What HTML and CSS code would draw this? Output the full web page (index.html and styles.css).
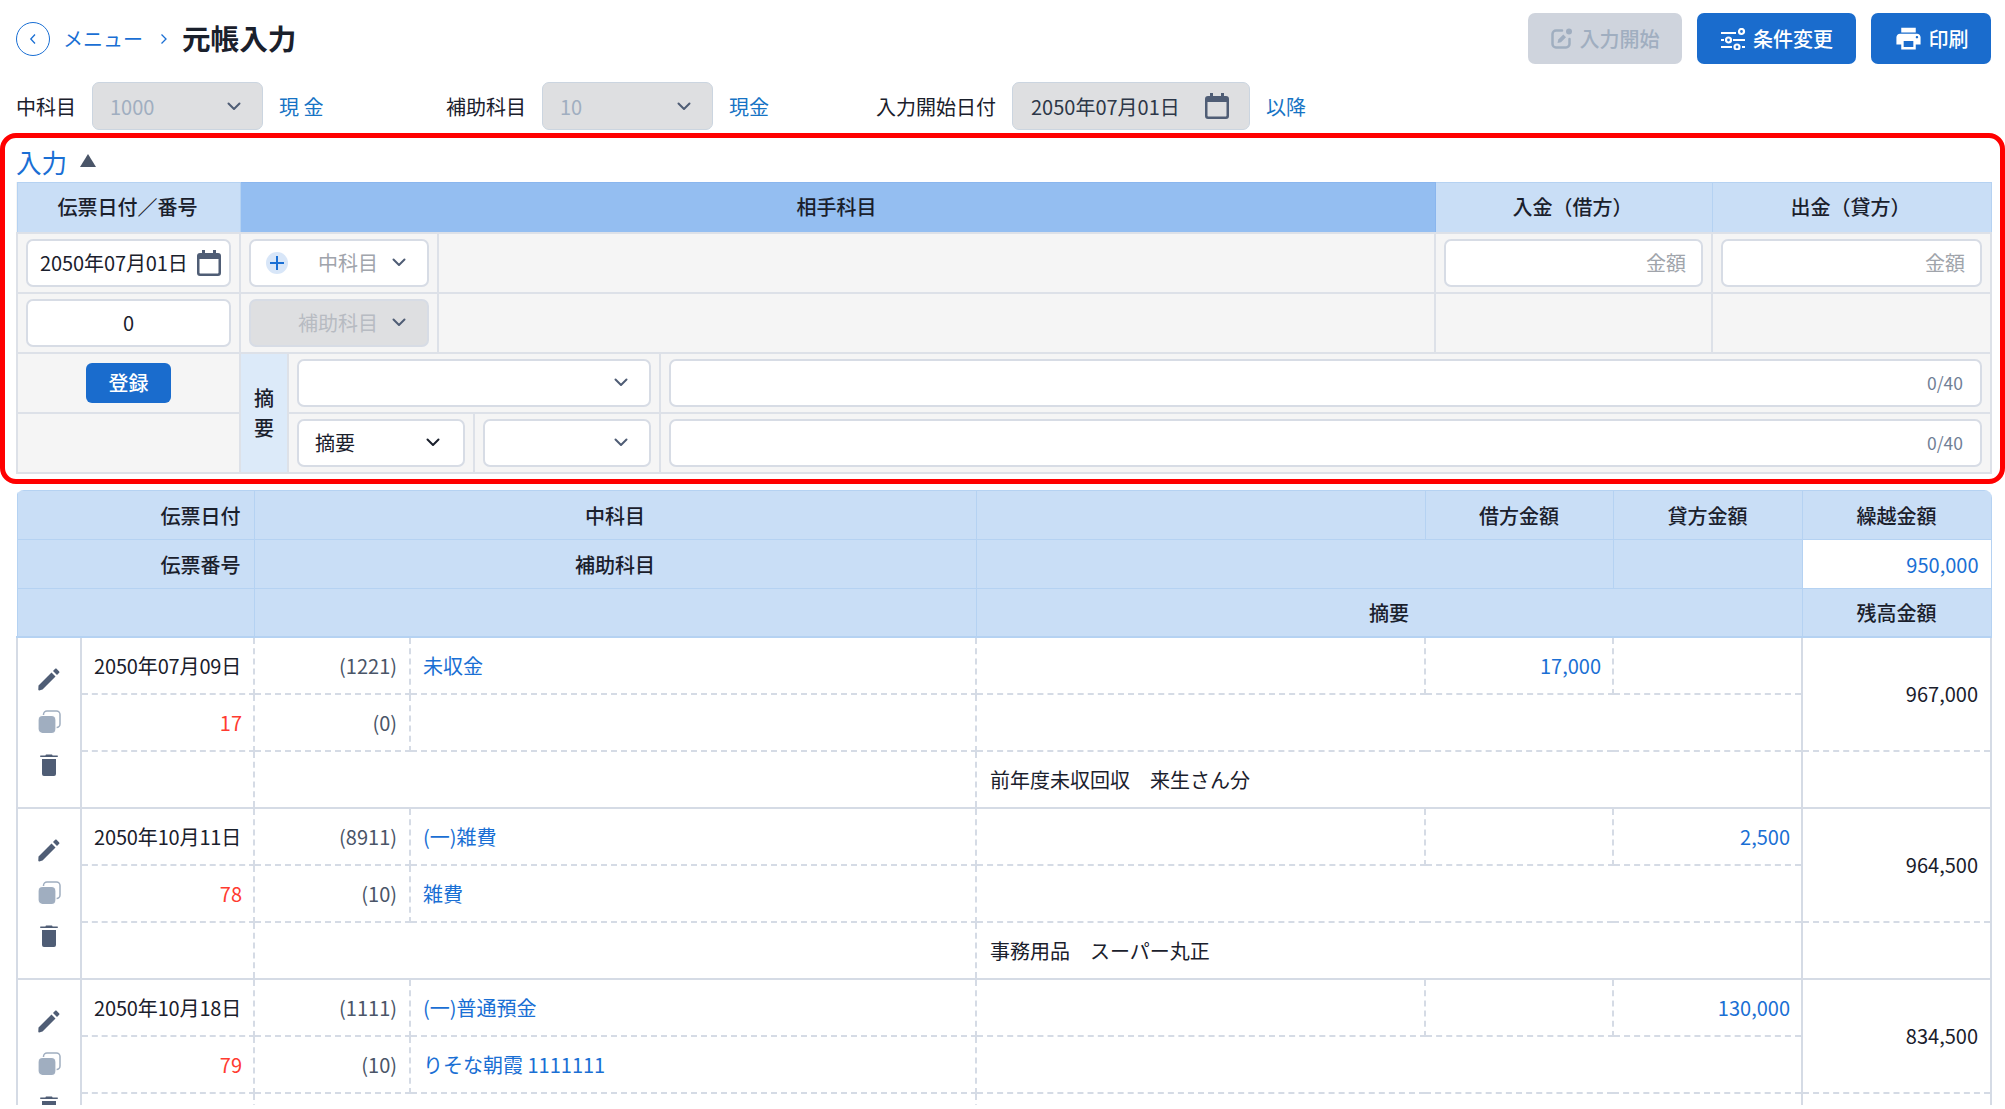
FILE: index.html
```html
<!DOCTYPE html>
<html lang="ja">
<head>
<meta charset="utf-8">
<title>元帳入力</title>
<link rel="stylesheet" href="styles.css">
</head>
<body>
<svg width="0" height="0" class="defs">
  <symbol id="chev" viewBox="0 0 14 9"><path d="M1.5 1.5 7 7l5.5-5.5" fill="none" stroke="currentColor" stroke-width="2" stroke-linecap="round" stroke-linejoin="round"/></symbol>
  <symbol id="cal" viewBox="0 0 24 26"><path d="M5 0h3v3h8V0h3v3h2a3 3 0 0 1 3 3v17a3 3 0 0 1-3 3H3a3 3 0 0 1-3-3V6a3 3 0 0 1 3-3h2zM2.500 9v13.500c0 .6.4 1 1 1h17c.6 0 1-.4 1-1V9z" fill="currentColor" fill-rule="evenodd"/></symbol>
  <symbol id="pen" viewBox="0 0 24 24"><path d="M1.500 18.500 14.500 5.500l4 4-13 13-3.300.9c-.5.1-1-.3-.9-.9zM16 4l2.200-2.200c.4-.4 1-.4 1.400 0l2.600 2.600c.4.4.4 1 0 1.400L20 8z" fill="currentColor"/></symbol>
  <symbol id="copy" viewBox="0 0 24 24"><rect x="6.500" y="1" width="16.500" height="16.500" rx="3.500" fill="none" stroke="#a0aec0" stroke-width="1.500"/><rect x="1" y="5.500" width="18" height="18" rx="4.500" fill="#a0aec0" stroke="#fff" stroke-width="1.200"/></symbol>
  <symbol id="trash" viewBox="0 0 24 24"><path d="M9.500 1.500h5c.5 0 1 .4 1 .9h5c.5 0 .5 1.600 0 1.600h-17c-.5 0-.5-1.600 0-1.600h5c0-.5.500-.9 1-.9zM5 6h14v15a2 2 0 0 1-2 2H7a2 2 0 0 1-2-2z" fill="currentColor"/></symbol>
</svg>

<div class="page">
  <header class="top">
    <nav class="crumb">
      <a class="back"><svg width="8" height="12" viewBox="0 0 8 12"><path d="M6 1.500 1.800 6 6 10.500" fill="none" stroke="currentColor" stroke-width="1.300"/></svg></a>
      <a class="crumb-link">メニュー</a>
      <svg class="crumb-sep" width="8" height="12" viewBox="0 0 8 12"><path d="M1.500 1.500 6 6l-4.500 4.500" fill="none" stroke="currentColor" stroke-width="1.300"/></svg>
      <h1 class="title">元帳入力</h1>
    </nav>
    <div class="actions">
      <button class="btn btn-off">
        <svg width="22" height="21" viewBox="0 0 22 21"><path d="M11 2.500H5A3.500 3.500 0 0 0 1.500 6v10A3.500 3.500 0 0 0 5 19.500h10a3.500 3.500 0 0 0 3.500-3.500v-5" fill="none" stroke="currentColor" stroke-width="2.500" stroke-linecap="round"/><path d="m6.500 15 .8-3.500 5-5 2.700 2.700-5 5z" fill="currentColor"/><circle cx="18" cy="3.500" r="3" fill="currentColor"/></svg>
        <span>入力開始</span>
      </button>
      <button class="btn">
        <svg width="26" height="22" viewBox="0 0 26 22" fill="none" stroke="#fff" stroke-width="2.200"><path d="M1 5h15M1 12h3M13 12h12M1 19h11M22 19h3"/><circle cx="21.500" cy="3.500" r="2.500"/><circle cx="8.500" cy="12" r="2.500"/><circle cx="17" cy="19" r="2.500"/></svg>
        <span>条件変更</span>
      </button>
      <button class="btn btn-print">
        <svg width="29" height="29" viewBox="0 0 24 24"><path fill="#fff" d="M19 8H5c-1.660 0-3 1.340-3 3v6h4v4h12v-4h4v-6c0-1.660-1.340-3-3-3zm-3 11H8v-5h8v5zm3-7c-.55 0-1-.45-1-1s.45-1 1-1 1 .45 1 1-.45 1-1 1zm-1-9H6v4h12V3z"/></svg>
        <span>印刷</span>
      </button>
    </div>
  </header>

  <div class="filters">
    <div class="filter filter-a">
      <label>中科目</label>
      <div class="pick pick-off"><span>1000</span><svg class="chev"><use href="#chev"/></svg></div>
      <a class="teal">現 金</a>
    </div>
    <div class="filter filter-b">
      <label>補助科目</label>
      <div class="pick pick-off"><span>10</span><svg class="chev"><use href="#chev"/></svg></div>
      <a class="teal">現金</a>
    </div>
    <div class="filter">
      <label>入力開始日付</label>
      <div class="pick pick-date"><span>2050年07月01日</span><svg class="cal"><use href="#cal"/></svg></div>
      <a class="teal">以降</a>
    </div>
  </div>

  <section class="entry">
    <div class="entry-head"><span class="entry-title">入力</span><i class="tri"></i></div>
    <table class="form">
      <colgroup><col class="f1"><col class="f2"><col class="f3"><col class="f4"><col class="f5"><col class="f6"><col class="f7"><col class="f8"></colgroup>
      <tr class="form-head">
        <th>伝票日付／番号</th>
        <th class="deep" colspan="5">相手科目</th>
        <th>入金（借方）</th>
        <th>出金（貸方）</th>
      </tr>
      <tr>
        <td><div class="field date"><span>2050年07月01日</span><svg class="cal"><use href="#cal"/></svg></div></td>
        <td colspan="2"><div class="field acc"><i class="plus"></i><span class="ph">中科目</span><svg class="chev"><use href="#chev"/></svg></div></td>
        <td colspan="3"></td>
        <td><div class="field right"><span class="ph">金額</span></div></td>
        <td><div class="field right"><span class="ph">金額</span></div></td>
      </tr>
      <tr>
        <td><div class="field center"><span>0</span></div></td>
        <td colspan="2"><div class="field acc acc-off"><span class="ph-off">補助科目</span><svg class="chev"><use href="#chev"/></svg></div></td>
        <td colspan="3"></td>
        <td></td>
        <td></td>
      </tr>
      <tr>
        <td class="mid"><button class="submit">登録</button></td>
        <td class="memo-label" rowspan="2">摘<br>要</td>
        <td colspan="3"><div class="field end"><svg class="chev"><use href="#chev"/></svg></div></td>
        <td colspan="3"><div class="field right"><span class="count">0/40</span></div></td>
      </tr>
      <tr>
        <td></td>
        <td colspan="2"><div class="field between"><span>摘要</span><svg class="chev dark"><use href="#chev"/></svg></div></td>
        <td><div class="field end"><svg class="chev"><use href="#chev"/></svg></div></td>
        <td colspan="3"><div class="field right"><span class="count">0/40</span></div></td>
      </tr>
    </table>
  </section>

  <div class="ledger">
    <table class="grid">
      <colgroup><col class="g1"><col class="g2"><col class="g3"><col class="g4"><col class="g5"><col class="g6"><col class="g7"><col class="g8"></colgroup>
      <thead>
        <tr>
          <th class="r" colspan="2">伝票日付</th>
          <th colspan="2">中科目</th>
          <th></th>
          <th>借方金額</th>
          <th>貸方金額</th>
          <th>繰越金額</th>
        </tr>
        <tr>
          <th class="r" colspan="2">伝票番号</th>
          <th colspan="2">補助科目</th>
          <th colspan="2"></th>
          <th></th>
          <th class="carry">950,000</th>
        </tr>
        <tr class="head-last">
          <th colspan="2"></th>
          <th colspan="2"></th>
          <th colspan="3">摘要</th>
          <th>残高金額</th>
        </tr>
      </thead>
      <tbody>
        <tr class="first">
          <td class="tools" rowspan="3"><div class="tool-stack"><svg class="tool ink"><use href="#pen"/></svg><svg class="tool"><use href="#copy"/></svg><svg class="tool ink"><use href="#trash"/></svg></div></td>
          <td class="l date-cell">2050年07月09日</td><td class="code">(1221)</td><td class="l blue">未収金</td><td></td><td class="num blue">17,000</td><td></td>
          <td class="bal" rowspan="2">967,000</td>
        </tr>
        <tr>
          <td class="num red">17</td><td class="code">(0)</td><td></td><td colspan="3"></td>
        </tr>
        <tr class="third">
          <td></td><td colspan="2"></td><td class="l memo" colspan="3">前年度未収回収　来生さん分</td><td class="bal-end"></td>
        </tr>

        <tr class="first">
          <td class="tools" rowspan="3"><div class="tool-stack"><svg class="tool ink"><use href="#pen"/></svg><svg class="tool"><use href="#copy"/></svg><svg class="tool ink"><use href="#trash"/></svg></div></td>
          <td class="l date-cell">2050年10月11日</td><td class="code">(8911)</td><td class="l blue">(一)雑費</td><td></td><td></td><td class="num blue">2,500</td>
          <td class="bal" rowspan="2">964,500</td>
        </tr>
        <tr>
          <td class="num red">78</td><td class="code">(10)</td><td class="l blue">雑費</td><td colspan="3"></td>
        </tr>
        <tr class="third">
          <td></td><td colspan="2"></td><td class="l memo" colspan="3">事務用品　スーパー丸正</td><td class="bal-end"></td>
        </tr>

        <tr class="first">
          <td class="tools" rowspan="3"><div class="tool-stack"><svg class="tool ink"><use href="#pen"/></svg><svg class="tool"><use href="#copy"/></svg><svg class="tool ink"><use href="#trash"/></svg></div></td>
          <td class="l date-cell">2050年10月18日</td><td class="code">(1111)</td><td class="l blue">(一)普通預金</td><td></td><td></td><td class="num blue">130,000</td>
          <td class="bal" rowspan="2">834,500</td>
        </tr>
        <tr>
          <td class="num red">79</td><td class="code">(10)</td><td class="l blue">りそな朝霞 1111111</td><td colspan="3"></td>
        </tr>
        <tr class="third">
          <td></td><td colspan="2"></td><td class="l memo" colspan="3"></td><td class="bal-end"></td>
        </tr>
      </tbody>
    </table>
  </div>
</div>
</body>
</html>
```

FILE: styles.css
```css
* { box-sizing: border-box; }
html, body { margin: 0; background: #fff; }
body {
  font-family: "Noto Sans CJK JP", "Noto Sans", sans-serif;
  font-size: 20px;
  color: #1a202c;
}
.defs { position: absolute; }
.page { height: 1105px; overflow: hidden; }

/* top bar */
.top {
  display: flex;
  justify-content: space-between;
  align-items: center;
  height: 69px;
  padding: 13px 14px 5px 16px;
}
.crumb { display: flex; align-items: center; color: #1a6fd4; }
.back {
  width: 34px; height: 34px;
  border: 1.5px solid #1a6fd4;
  border-radius: 50%;
  display: flex; align-items: center; justify-content: center;
}
.crumb-link { margin-left: 13px; line-height: 1; }
.crumb-sep { margin-left: 17px; }
.title { margin: 0 0 0 14px; font-size: 28.6px; font-weight: 700; line-height: 1; color: #1a202c; }
.actions { display: flex; gap: 15px; }
.btn {
  display: flex; align-items: center; justify-content: center; gap: 7px;
  width: 159px; height: 51px;
  border: 0; border-radius: 7px;
  background: #1a6ccd; color: #fff;
  font: 500 20px "Noto Sans CJK JP", sans-serif;
}
.btn-off { width: 154px; background: #cfd4dd; color: #a0aec0; }
.btn-print { width: 120px; gap: 6px; }

/* filters */
.filters {
  display: flex; align-items: center;
  height: 48px; margin-top: 13px;
  padding-left: 16px;
}
.filter { display: flex; align-items: center; }
.filter-a { width: 430px; }
.filter-b { width: 430px; }
.filter label { margin-right: 16px; }
.teal { color: #1673c4; margin-left: 16px; }
.pick {
  display: flex; align-items: center; justify-content: space-between;
  width: 171px; height: 48px;
  padding: 0 21px 0 17px;
  background: #dedfe1; border: 1px solid #cbd5e0; border-radius: 7px;
  color: #a0aec0;
}
.pick-date { width: 238px; padding: 0 20px 0 18px; color: #2d3748; }
.chev { width: 14px; height: 9px; color: #4f5d75; flex: none; }
.chev.dark { color: #1a202c; }
.cal { width: 24px; height: 26px; color: #4f5d75; flex: none; }

/* entry */
.entry {
  height: 351px; margin-top: 3px;
  border: 5px solid #ff0000; border-radius: 16px;
  padding: 0 10px 0 11px;
}
.entry-head { display: flex; align-items: center; height: 44px; padding-top: 4px; }
.entry-title { font-size: 25.6px; line-height: 1; color: #1a6fd4; }
.tri {
  width: 0; height: 0; margin: -3px 0 0 13px;
  border-left: 8px solid transparent; border-right: 8px solid transparent;
  border-bottom: 13px solid #4a5568;
}
.form { width: 1974px; table-layout: fixed; border-collapse: collapse; background: #f5f5f5; }
.f1 { width: 223px; } .f2 { width: 48px; } .f3 { width: 150px; } .f4 { width: 36px; }
.f5 { width: 186px; } .f6 { width: 775px; } .f7 { width: 277px; } .f8 { width: 279px; }
.form th {
  height: 50px; padding: 0 2px 2px 0;
  background: #c9def6;
  border: 1px solid #b5d2f2;
  font-weight: 500; text-align: center;
}
.form th.deep { background: #94bef1; border-color: #8ab6ee; }
.form td {
  height: 60px; padding: 0 8px;
  border: 2px solid #dde1e8;
}
.form td.mid { text-align: center; }
.form td.memo-label {
  padding: 0; text-align: center; line-height: 30px;
  background: #dceaf9; font-weight: 500;
}
.field {
  display: flex; align-items: center;
  height: 48px; padding: 0 16px;
  background: #fff; border: 2px solid #d7dce5; border-radius: 7px;
}
.date { justify-content: space-between; padding: 0 8px 0 12px; letter-spacing: -.1px; }
.right { justify-content: flex-end; padding-right: 15px; }
.center { justify-content: center; }
.end { justify-content: flex-end; padding-right: 21px; }
.between { justify-content: space-between; padding: 0 23px 0 16px; }
.acc { padding: 0 21px 0 16px; justify-content: flex-end; position: relative; }
.acc .chev { margin-left: 14px; }
.acc-off { background: #dedfe1; }
.plus {
  position: absolute; left: 15px; top: 11px;
  width: 22px; height: 22px; border-radius: 50%;
  background:
    linear-gradient(#1a6fd4, #1a6fd4) center / 14px 2px no-repeat,
    linear-gradient(#1a6fd4, #1a6fd4) center / 2px 14px no-repeat,
    #d8e6f8;
}
.ph { color: #a0a4ab; }
.ph-off { color: #b7bbc2; }
.count { font-size: 17.5px; margin-right: 2px; color: #718096; }
.submit {
  width: 85px; height: 40px;
  border: 0; border-radius: 6px;
  background: #1a6ccd; color: #fff;
  font: 500 20px "Noto Sans CJK JP", sans-serif;
}

/* ledger */
.ledger {
  width: 1976px; margin: 6px 0 0 16px;
  border-radius: 8px 8px 0 0; overflow: hidden;
}
.grid { width: 1974px; table-layout: fixed; border-collapse: collapse; }
.g1 { width: 64px; } .g2 { width: 173px; } .g3 { width: 156px; } .g4 { width: 566px; }
.g5 { width: 449px; } .g6 { width: 188px; } .g7 { width: 189px; } .g8 { width: 189px; }
.grid th {
  height: 49px; padding: 0 13px;
  background: #c9def6;
  border: 1px solid #b5d2f2;
  font-weight: 500; text-align: center;
}
.grid th.r { text-align: right; }
.grid th.carry { background: #fff; text-align: right; color: #1a6fd4; font-weight: 400; padding-right: 12px; }
.head-last th { height: 48px; border-bottom-width: 2px; }
.grid td {
  height: 57px; padding: 0 12px;
  border: 2px dashed #d5dbe5;
  vertical-align: middle;
  white-space: nowrap;
  overflow: hidden;
}
.grid td.date-cell { letter-spacing: -.15px; padding-right: 0; }
.grid td.num { padding-right: 11px; }
.grid td.memo { padding-left: 13px; }
.grid tr.first td { border-top: 2px solid #d5dbe5; }
.grid tbody tr.first:first-child td { border-top: 2px solid #b5d2f2; }
.grid td.tools { padding: 0; border: 2px solid #d5dbe5; }
.grid td.bal { text-align: right; border-left: 2px solid #d5dbe5; border-right: 2px solid #d5dbe5; padding-right: 12px; }
.grid td.bal-end { border-left: 2px solid #d5dbe5; border-right: 2px solid #d5dbe5; }
.tool-stack { display: flex; flex-direction: column; align-items: center; gap: 19px; }
.tool { width: 24px; height: 24px; color: #4f5d75; }
.num, .code { text-align: right; }
.code { color: #4a5568; }
.blue { color: #1a6fd4; }
.red { color: #ff3b30; }
```
